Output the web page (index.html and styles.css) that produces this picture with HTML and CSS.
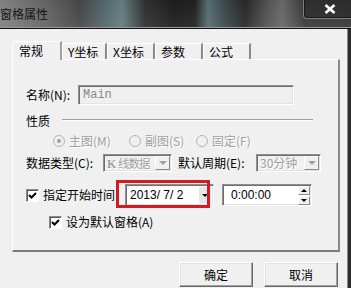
FILE: index.html
```html
<!DOCTYPE html>
<html>
<head>
  <title>窗格属性</title>
  <link rel="stylesheet" href="styles.css">
</head>
<body>
  <div class="window">
    <div class="titlebar">
      <span class="title">窗格属性</span>
      <div class="close">
        <svg width="12" height="10" viewBox="0 0 12 10"><path d="M1.5 1 L10.5 9 M10.5 1 L1.5 9" stroke="#fff" stroke-width="2.6"/></svg>
      </div>
    </div>
    <div class="frame">
      <div class="client">
        <div class="tabs">
          <div class="tab active">常规</div>
          <div class="tab tab-y">Y坐标</div>
          <div class="tab tab-x">X坐标</div>
          <div class="tab tab-p">参数</div>
          <div class="tab tab-f">公式</div>
        </div>

        <div class="panel">
          <div class="row name-row">
            <span class="lbl name-lbl">名称(N):</span>
            <div class="field name-field">Main</div>
          </div>

          <div class="row group-row">
            <span class="lbl group-lbl">性质</span>
            <span class="etched"></span>
          </div>

          <div class="row radio-row">
            <div class="radio-item item-main"><span class="radio on"></span><span class="dim">主图(M)</span></div>
            <div class="radio-item item-sub"><span class="radio"></span><span class="dim">副图(S)</span></div>
            <div class="radio-item"><span class="radio"></span><span class="dim">固定(F)</span></div>
          </div>

          <div class="row type-row">
            <span class="lbl type-lbl">数据类型(C):</span>
            <div class="field combo combo-type"><span class="dim combo-text tight"><b class="k">K</b> 线数据</span><span class="combo-btn"><i class="tri grey"></i></span></div>
            <span class="lbl period-lbl">默认周期(E):</span>
            <div class="field combo combo-period"><span class="dim combo-text">30分钟</span><span class="combo-btn"><i class="tri grey"></i></span></div>
          </div>

          <div class="row date-row">
            <div class="check-item start-lbl"><span class="check"></span><span>指定开始时间</span></div>
            <div class="date-wrap">
              <div class="field date-field"><span class="num">2013/ 7/ 2</span><span class="date-btn"><i class="tri small"></i></span></div>
              <div class="highlight"></div>
            </div>
            <div class="field time-field">
              <span class="num">0:00:00</span>
              <div class="spin">
                <span class="spin-btn"><i class="tri up"></i></span>
                <span class="spin-btn"><i class="tri small"></i></span>
              </div>
            </div>
          </div>

          <div class="row default-row">
            <div class="check-item"><span class="check"></span><span>设为默认窗格(A)</span></div>
          </div>
        </div>

        <div class="buttons">
          <button class="btn">确定</button>
          <button class="btn">取消</button>
        </div>
      </div>
      <div class="edge"></div>
    </div>
  </div>
</body>
</html>
```

FILE: styles.css
```css
* {
  box-sizing: border-box;
}

body {
  margin: 0;
  background: #1c1c1c;
  font-family: "Noto Sans CJK SC", sans-serif;
  font-size: 12px;
  color: #000;
}

.window {
  width: 351px;
  height: 288px;
  display: flex;
  flex-direction: column;
  overflow: hidden;
}

/* title bar */
.titlebar {
  height: 29px;
  display: flex;
  align-items: flex-start;
  border-bottom: 1px solid #111;
  box-shadow: inset 0 -1px 0 #9a9a9a;
  background:
    linear-gradient(to bottom, rgba(255,255,255,0.05), rgba(255,255,255,0.12)),
    linear-gradient(to right, #7a7a7a 0px, #5c5c5c 45px, #3b3b3b 80px, #4e676d 112px, #5a7479 122px, #242424 145px, #0f0f0f 175px, #151515 195px, #4c636a 208px, #2f3c40 225px, #1b1b1b 245px, #4a4a4a 268px, #5e5e5e 282px, #2e2e2e 305px, #2a2a2a 351px);
}

.title {
  margin-top: 6px;
  line-height: 16px;
  color: #141414;
}

.close {
  margin-left: auto;
  width: 48px;
  height: 19px;
  display: flex;
  align-items: center;
  justify-content: center;
  border: 1px solid rgba(190,190,190,0.55);
  border-top: none;
  border-right: none;
  border-bottom-left-radius: 4px;
  box-shadow: inset 1px -1px 0 rgba(0,0,0,0.5);
  background: rgba(30,30,30,0.35);
  padding-left: 4px;
}

/* body frame */
.frame {
  flex: 1;
  display: flex;
}

.client {
  width: 347px;
  background: #f0f0f0;
  padding: 12px 0 0 12px;
}

.edge {
  flex: 1;
  border-left: 1px solid #8a8a8a;
  background: #2b2b2b;
}

/* tabs */
.tabs {
  display: flex;
  align-items: flex-end;
  height: 18px;
}

.tab {
  height: 16px;
  line-height: 15px;
  padding-left: 5px;
  border-top: 1px solid #fff;
  border-left: 1px solid #fff;
  border-right: 2px solid #8a8a8a;
  border-top-left-radius: 2px;
  background: #f0f0f0;
}

.tab.active {
  width: 50px;
  height: 19px;
  line-height: 17px;
  padding-left: 6px;
  margin-bottom: -1px;
  position: relative;
  z-index: 1;
  border-right: 2px solid #a0a0a0;
}

.tab-y { width: 45px; }
.tab-x { width: 48px; }
.tab-p { width: 48px; }
.tab-f { width: 48px; }

/* panel */
.panel {
  width: 328px;
  height: 193px;
  border: 1px solid #fff;
  border-right: 2px solid #8a8a8a;
  border-bottom: 2px solid #7a7a7a;
  padding-left: 13px;
}

.row {
  display: flex;
  align-items: center;
}

.lbl {
  line-height: 16px;
  white-space: nowrap;
}

.dim {
  color: #a0a0a0;
  text-shadow: 1px 1px 0 #fff;
}

.field {
  display: flex;
  align-items: center;
  border: 1px solid;
  border-color: #8f8f8f #fff #fff #8f8f8f;
  box-shadow: inset 1px 1px 0 #6d6d6d, inset -1px -1px 0 #e3e3e3;
}

.name-row {
  margin-top: 25px;
  height: 20px;
}

.name-lbl { width: 52px; }

.name-field {
  width: 216px;
  height: 20px;
  padding-left: 4px;
  background: #f0f0f0;
  font-family: "Liberation Mono", monospace;
  font-size: 12px;
  color: #8a8a8a;
}

.group-row {
  margin-top: 6px;
  height: 20px;
}

.group-lbl { width: 36px; }

.etched {
  align-self: flex-start;
  margin-top: 8px;
  width: 251px;
  border-top: 1px solid #a0a0a0;
  border-bottom: 1px solid #fff;
}

.radio-row {
  margin-top: 3px;
  height: 14px;
  padding-left: 27px;
}

.radio-item {
  display: flex;
  align-items: center;
  gap: 4px;
  line-height: 14px;
}

.item-main { width: 76px; }
.item-sub { width: 67px; }

.radio {
  width: 12px;
  height: 12px;
  border-radius: 50%;
  border: 1px solid #b4b4b4;
  background: #f0f0f0;
  position: relative;
}

.radio.on::after {
  content: "";
  position: absolute;
  left: 3px;
  top: 3px;
  width: 4px;
  height: 4px;
  border-radius: 50%;
  background: #a0a0a0;
}

.type-row {
  margin-top: 6px;
  height: 18px;
}

.type-lbl { width: 77px; }

.period-lbl {
  width: 78px;
  margin-left: 6px;
}

.combo {
  height: 18px;
  background: #f0f0f0;
  padding: 2px 1px 2px 2px;
  justify-content: space-between;
  overflow: hidden;
}

.combo-type { width: 69px; }
.combo-period { width: 65px; }

.combo-text {
  padding-left: 1px;
  line-height: 14px;
  white-space: nowrap;
}

.combo-text.tight {
  letter-spacing: -1px;
  font-size: 11.5px;
}

.k {
  font-family: "Liberation Serif", serif;
  font-size: 12px;
  letter-spacing: 0;
}

.combo-btn {
  flex: none;
  width: 15px;
  height: 14px;
  display: flex;
  align-items: center;
  justify-content: center;
  border: 1px solid;
  border-color: #fff #8a8a8a #8a8a8a #fff;
  background: #f0f0f0;
}

.tri {
  width: 0;
  height: 0;
  border-left: 4px solid transparent;
  border-right: 4px solid transparent;
  border-top: 4px solid #000;
}

.tri.grey { border-top-color: #a0a0a0; }

.tri.small {
  border-left-width: 3px;
  border-right-width: 3px;
  border-top-width: 3px;
}

.tri.up {
  border-left: 3px solid transparent;
  border-right: 3px solid transparent;
  border-top: none;
  border-bottom: 3px solid #000;
}

/* start date row */
.date-row {
  margin-top: 12px;
  height: 22px;
}

.check-item {
  display: flex;
  align-items: center;
  gap: 4px;
  line-height: 16px;
}

.start-lbl { width: 99px; }

.check {
  width: 13px;
  height: 13px;
  border: 1px solid;
  border-color: #8a8a8a #fff #fff #8a8a8a;
  box-shadow: inset 1px 1px 0 #555;
  background: #fff url("data:image/svg+xml,%3Csvg xmlns='http://www.w3.org/2000/svg' width='11' height='11'%3E%3Cpath d='M2 5 L4.5 7.5 L9 3' fill='none' stroke='%23000' stroke-width='2'/%3E%3C/svg%3E") center/11px 11px no-repeat;
}

.date-wrap {
  position: relative;
}

.date-field {
  width: 89px;
  height: 22px;
  background: #fff;
  padding: 2px 2px 2px 4px;
  justify-content: space-between;
}

.num {
  font-family: "Liberation Sans", sans-serif;
  font-size: 12px;
  line-height: 16px;
}

.date-btn {
  width: 12px;
  height: 16px;
  display: flex;
  align-items: center;
  justify-content: center;
  background: #e6e6e6;
}

.highlight {
  position: absolute;
  left: -9px;
  top: -4px;
  width: 94px;
  height: 28px;
  border: 3px solid #d11c24;
}

.time-field {
  width: 90px;
  height: 22px;
  margin-left: 8px;
  background: #fff;
  padding: 1px 1px 1px 8px;
  justify-content: space-between;
}

.spin {
  display: flex;
  flex-direction: column;
  gap: 1px;
}

.spin-btn {
  width: 12px;
  height: 9px;
  display: flex;
  align-items: center;
  justify-content: center;
  border: 1px solid;
  border-color: #fff #8a8a8a #8a8a8a #fff;
  background: #f0f0f0;
}

.default-row {
  margin-top: 9px;
  height: 14px;
  padding-left: 23px;
}

/* buttons */
.buttons {
  display: flex;
  justify-content: flex-end;
  gap: 11px;
  margin-top: 10px;
  padding-right: 9px;
}

.btn {
  width: 74px;
  height: 25px;
  padding: 0;
  font-family: "Noto Sans CJK SC", sans-serif;
  font-size: 12px;
  color: #000;
  background: #f0f0f0;
  border: 1px solid;
  border-color: #fff #696969 #696969 #fff;
  box-shadow: inset -1px -1px 0 #a0a0a0, inset 1px 1px 0 #e3e3e3;
  border-radius: 0;
}
```
